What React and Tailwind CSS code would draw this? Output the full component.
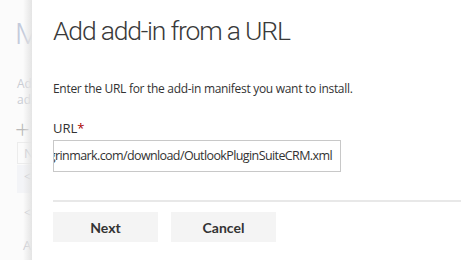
const font = { fontFamily: '"Open Sans", "Noto Sans", Arial, sans-serif' };
const titleFont = { fontFamily: 'Roboto, "Open Sans", Arial, sans-serif' };
const btnFont = { fontFamily: 'Lato, "Open Sans", Arial, sans-serif' };

const App = () => {
  return (
    <div className="w-[461px] h-[260px] flex bg-white overflow-hidden" style={font}>
      {/* Background page behind the panel */}
      <div className="relative w-[32px] shrink-0 bg-[#fbfbfb] text-[#c9ccd3] overflow-hidden">
        <div className="absolute left-[15px] top-[19px] text-[30px] font-light leading-none text-[#c4cbdc]" style={titleFont}>M</div>
        <div className="absolute left-[17px] top-[76px] text-[12px] leading-[16px]">
          Ad
          <br />
          ad
        </div>
        <div className="absolute left-[15px] top-[116px] text-[26px] font-light leading-none text-[#b9b9b9]">+</div>
        <div className="absolute left-[17px] top-[142px] w-[30px] h-[22px] border border-[#ececec] text-[13px] pl-[6px] leading-[20px]">N</div>
        <div className="absolute left-[17px] top-[165px] w-[30px] h-[28px] bg-[#f3f4f7] text-[12px] pl-[7px] leading-[24px]">&lt;</div>
        <div className="absolute left-[24px] top-[204px] text-[12px]">&lt;</div>
        <div className="absolute left-[23px] top-[236px] text-[13px]">A</div>
        <div className="absolute right-0 top-0 bottom-0 w-[9px] bg-gradient-to-r from-transparent to-[#e4e4e4]" />
      </div>

      {/* Panel */}
      <div className="flex-1 bg-white pl-[21px] flex flex-col">
        <h1 className="mt-[13px] text-[26.5px] font-light leading-[36px] text-[#3a3a3a] tracking-[-1.2px]" style={titleFont}>
          Add add-in from a URL
        </h1>
        <p className="mt-[32px] text-[12px] leading-[16px] text-[#333333] tracking-[-0.3px]">
          Enter the URL for the add-in manifest you want to install.
        </p>
        <label className="mt-[22px] text-[13px] leading-[18px] text-[#333333]">
          URL<span className="text-[#a80000]">*</span>
        </label>
        <div className="mt-[3px] w-[288px] h-[32px] border border-[#c8c8c8] flex justify-end items-center overflow-hidden pr-[8px]">
          <span className="whitespace-nowrap text-[12.5px] text-[#333333] tracking-[-0.6px]">
            http://www.grinmark.com/download/OutlookPluginSuiteCRM.xml
          </span>
        </div>
        <div className="mt-[28px] h-[2px] bg-[#e8e8e8]" />
        <div className="mt-[10px] flex gap-[13px]" style={btnFont}>
          <button className="w-[105px] h-[30px] bg-[#f4f4f4] text-[14px] font-bold text-[#333333]">
            Next
          </button>
          <button className="w-[105px] h-[30px] bg-[#f4f4f4] text-[14px] font-bold text-[#333333]">
            Cancel
          </button>
        </div>
      </div>
    </div>
  );
};

export default App;
